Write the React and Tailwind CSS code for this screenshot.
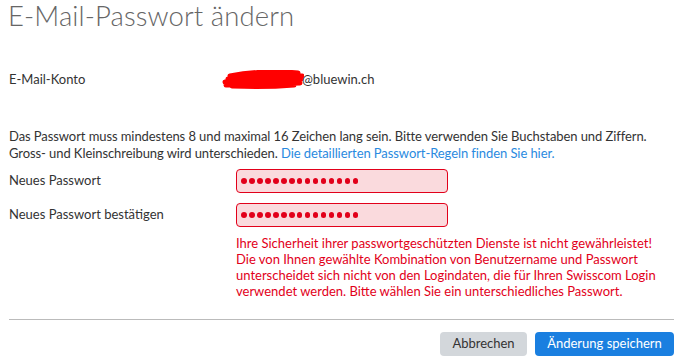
import React from 'react';

const font = { fontFamily: 'Lato, "Liberation Sans", sans-serif' };

const Dots = () => (
  <div className="flex items-center gap-[2.4px] pl-[4px]">
    {Array.from({ length: 15 }).map((_, i) => (
      <span key={i} className="block w-[5.6px] h-[5.6px] rounded-full bg-[#e2001a]" />
    ))}
  </div>
);

const Scribble = () => (
  <svg width="82" height="20" viewBox="0 0 82 20" className="block">
    <path
      d="M4 15 C20 13 40 14 78 13 M3 12 C25 10 50 9 79 9 M6 9 C30 5 60 4 80 6 M8 6 C30 2 55 1 76 3 M10 16 C35 17 60 16 72 15"
      stroke="#ff0000"
      strokeWidth="5"
      fill="none"
      strokeLinecap="round"
    />
  </svg>
);

export default function App() {
  return (
    <div className="w-[682px] h-[364px] bg-white text-[13px] text-[#333] overflow-hidden" style={font}>
      <h1 className="pl-[8px] pt-[1px] text-[27.5px] font-light text-[#666] leading-[30px] tracking-[0.1px]">
        E-Mail-Passwort ändern
      </h1>

      <div className="flex items-center mt-[39px] pl-[9px] h-[20px]">
        <div className="w-[213px]">E-Mail-Konto</div>
        <div className="flex items-center">
          <Scribble />
          <span className="-ml-[2px]">@bluewin.ch</span>
        </div>
      </div>

      <p className="mt-[38px] pl-[9px] leading-[17px] whitespace-nowrap tracking-[-0.08px]">
        Das Passwort muss mindestens 8 und maximal 16 Zeichen lang sein. Bitte verwenden Sie Buchstaben und Ziffern.
        <br />
        Gross- und Kleinschreibung wird unterschieden.{' '}
        <span className="text-[#2a8ae0]">Die detaillierten Passwort-Regeln finden Sie hier.</span>
      </p>

      <div className="flex items-center mt-[7px] pl-[9px] h-[24px]">
        <div className="w-[227px]">Neues Passwort</div>
        <div className="w-[212px] h-[24px] rounded-[4px] border border-[#e2001a] bg-[#fadadd] flex items-center">
          <Dots />
        </div>
      </div>

      <div className="flex items-center mt-[10px] pl-[9px] h-[24px]">
        <div className="w-[227px]">Neues Passwort bestätigen</div>
        <div className="w-[212px] h-[24px] rounded-[4px] border border-[#e2001a] bg-[#fadadd] flex items-center">
          <Dots />
        </div>
      </div>

      <p className="mt-[8px] pl-[236px] text-[#e2001a] leading-[16px] whitespace-nowrap">
        Ihre Sicherheit ihrer passwortgeschützten Dienste ist nicht gewährleistet!
        <br />
        Die von Ihnen gewählte Kombination von Benutzername und Passwort
        <br />
        unterscheidet sich nicht von den Logindaten, die für Ihren Swisscom Login
        <br />
        verwendet werden. Bitte wählen Sie ein unterschiedliches Passwort.
      </p>

      <div className="ml-[9px] mr-[8px] mt-[20px] border-t border-[#bbb]" />

      <div className="flex justify-end gap-[8px] mt-[12px] pr-[8px]">
        <button className="w-[87px] h-[24px] rounded-[4px] bg-[#d3d7db] text-[#333]">Abbrechen</button>
        <button className="w-[139px] h-[24px] rounded-[4px] bg-[#1a7fe0] text-white">Änderung speichern</button>
      </div>
    </div>
  );
}
